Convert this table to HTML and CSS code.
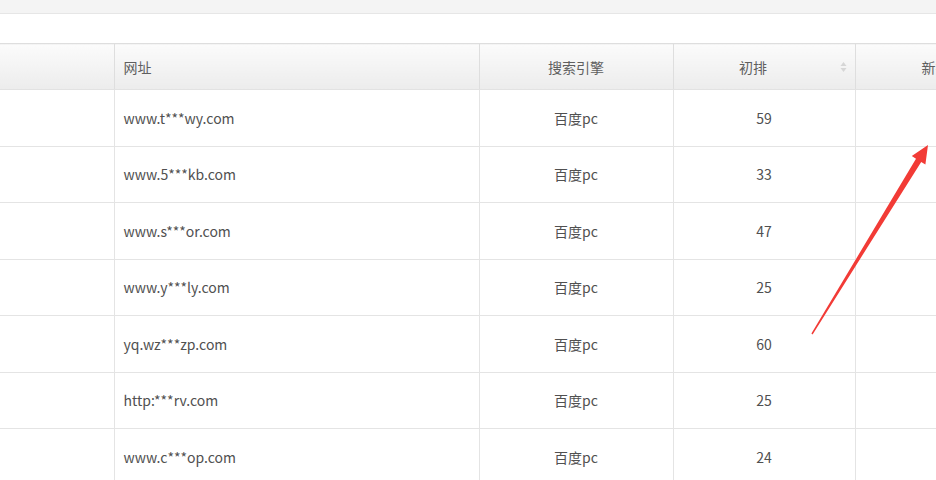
FILE: index.html
```html
<!DOCTYPE html>
<html lang="zh-CN">
<head>
<meta charset="utf-8">
<title>排名列表</title>
<link rel="stylesheet" href="styles.css">
</head>
<body>
<div class="topbar"></div>
<div class="spacer"></div>
<div class="table-wrap">
  <table class="rank-table">
    <colgroup>
      <col class="c1"><col class="c2"><col class="c3"><col class="c4"><col class="c5">
    </colgroup>
    <thead>
      <tr>
        <th></th>
        <th class="left">网址</th>
        <th>搜索引擎</th>
        <th class="sortable">初排<span class="sort"><svg width="7" height="12" viewBox="0 0 7 12"><path d="M3.5 1 L6.5 5 L0.5 5 Z" fill="#d6d6d6"/><path d="M3.5 11 L6.5 7 L0.5 7 Z" fill="#d6d6d6"/></svg></span></th>
        <th class="c5h">新排</th>
      </tr>
    </thead>
    <tbody>
      <tr><td></td><td class="left">www.t***wy.com</td><td>百度pc</td><td>59</td><td></td></tr>
      <tr><td></td><td class="left">www.5***kb.com</td><td>百度pc</td><td>33</td><td></td></tr>
      <tr><td></td><td class="left">www.s***or.com</td><td>百度pc</td><td>47</td><td></td></tr>
      <tr><td></td><td class="left">www.y***ly.com</td><td>百度pc</td><td>25</td><td></td></tr>
      <tr><td></td><td class="left">yq.wz***zp.com</td><td>百度pc</td><td>60</td><td></td></tr>
      <tr><td></td><td class="left">http:***rv.com</td><td>百度pc</td><td>25</td><td></td></tr>
      <tr><td></td><td class="left">www.c***op.com</td><td>百度pc</td><td>24</td><td></td></tr>
    </tbody>
  </table>
  <svg class="arrow" width="936" height="480" viewBox="0 0 936 480">
    <polygon points="811.4,332.6 916.0,157.7 911.8,155.1 928,144 925.4,163.5 921.2,160.9 812.6,333.4" fill="#f23b36"/>
  </svg>
</div>
</body>
</html>
```
FILE: styles.css
```css
html, body {
  margin: 0;
  padding: 0;
  background: #fff;
  overflow: hidden;
}
body {
  width: 936px;
  height: 480px;
  font-family: "Noto Sans CJK SC", "Microsoft YaHei", sans-serif;
  font-size: 14px;
  color: #555;
}
.topbar {
  height: 13px;
  background: #f4f4f4;
  border-bottom: 1px solid #e6e6e6;
}
.spacer {
  height: 29px;
}
.table-wrap {
  position: relative;
  width: 936px;
  overflow: hidden;
}
.rank-table {
  border-collapse: collapse;
  table-layout: fixed;
  width: 1016px;
}
.c1 { width: 114px; }
.c2 { width: 365px; }
.c3 { width: 194px; }
.c4 { width: 182px; }
.c5 { width: 161px; }
.rank-table th {
  height: 45px;
  padding: 0;
  font-weight: normal;
  color: #5f5f5f;
  text-align: center;
  background: linear-gradient(#fbfbfb, #ececec);
  border: 1px solid #dedede;
  border-bottom-color: #e2e2e2;
}
.rank-table th:first-child,
.rank-table td:first-child { border-left: none; }
.rank-table th.left,
.rank-table td.left {
  text-align: left;
  padding-left: 9px;
}
.rank-table th.sortable {
  position: relative;
  padding-right: 22px;
}
.sort {
  position: absolute;
  right: 8px;
  top: 17px;
  line-height: 0;
}
.rank-table td {
  height: 55.5px;
  padding: 0;
  text-align: center;
  color: #505050;
  border: 1px solid #e4e4e4;
  border-top: none;
}
.arrow {
  position: absolute;
  left: 0;
  top: -42px;
  pointer-events: none;
}
```
